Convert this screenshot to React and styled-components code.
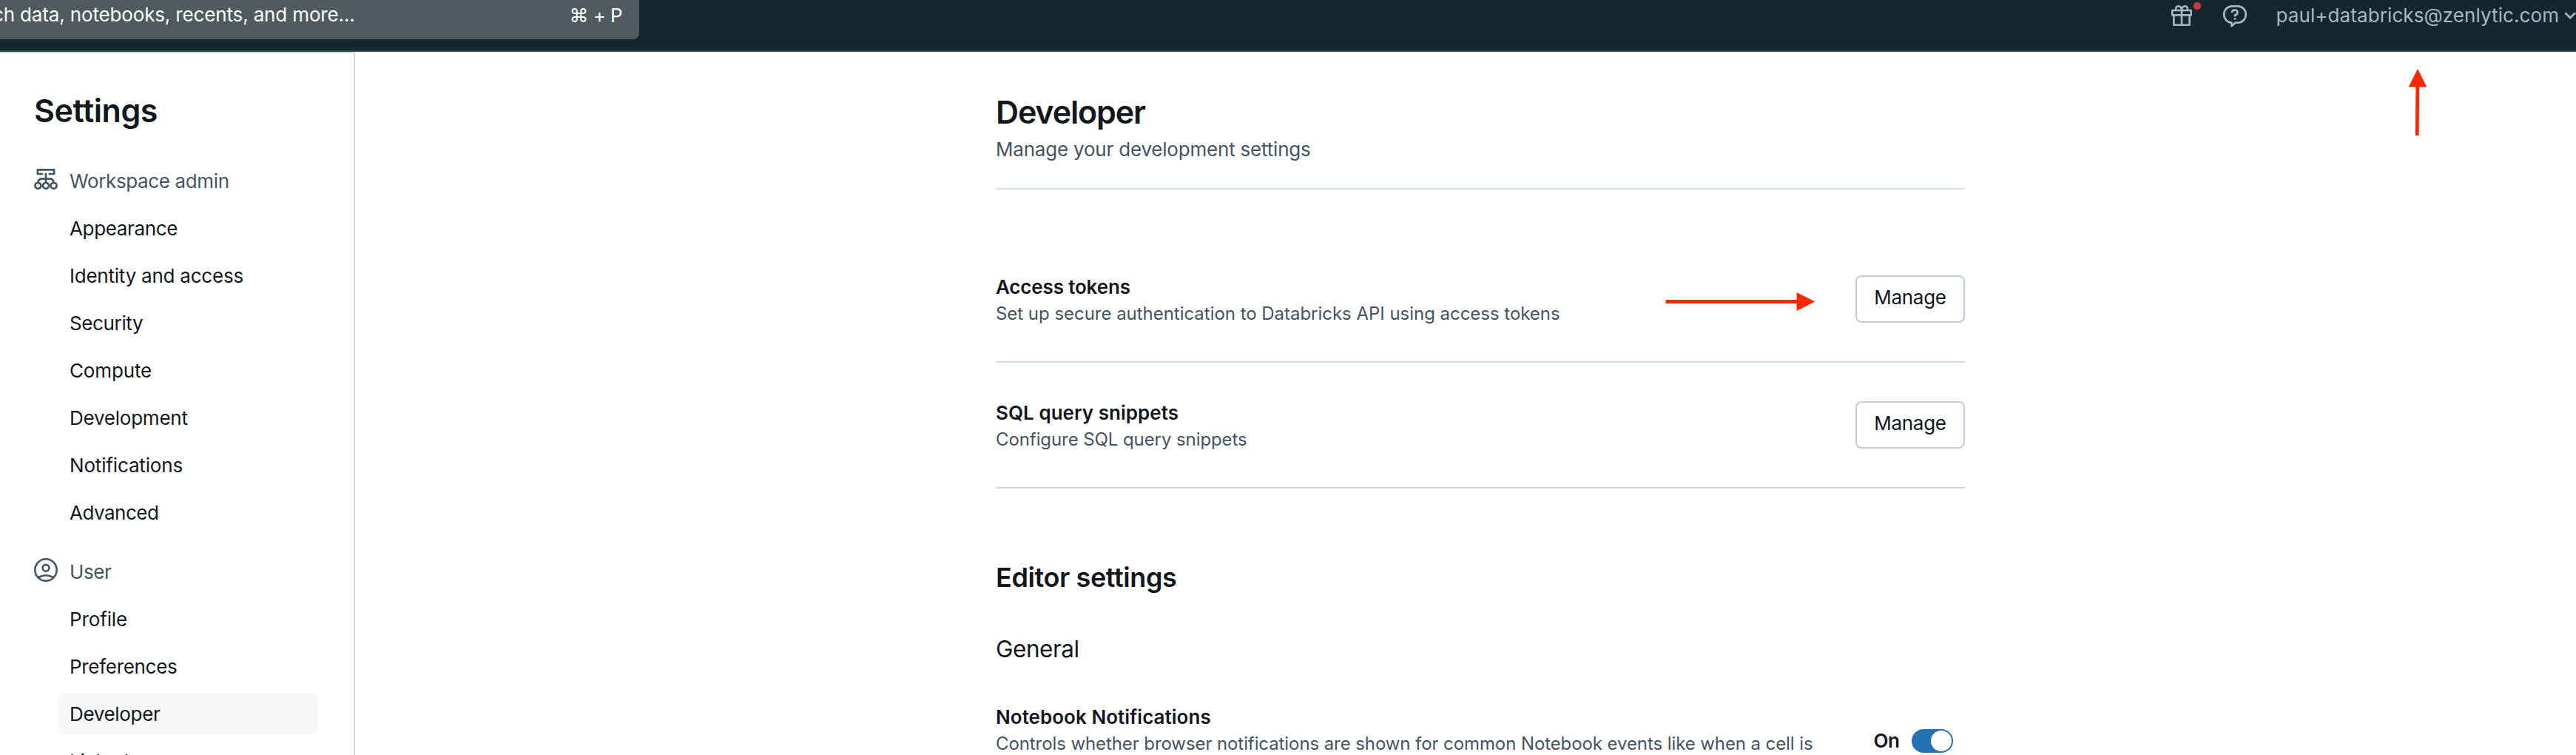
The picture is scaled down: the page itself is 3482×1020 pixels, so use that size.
import React from "react";
import styled, { createGlobalStyle } from "styled-components";

const GlobalStyle = createGlobalStyle`
  * { box-sizing: border-box; }
  html, body { margin: 0; padding: 0; background: #fff; }
  body { overflow: hidden; }
`;

const ink = "#11171c";
const muted = "#445461";
const line = "#d1d9e1";
const topIcon = "#a9b8c0";

const Page = styled.div`
  position: relative;
  display: flex;
  flex-direction: column;
  width: 3482px;
  height: 1020px;
  overflow: hidden;
  font-family: Inter, "Liberation Sans", sans-serif;
  font-size: 26px;
  color: ${ink};
  white-space: nowrap;
`;

const TopBar = styled.header`
  display: flex;
  justify-content: space-between;
  align-items: flex-start;
  flex: none;
  height: 70px;
  background: #13272f;
  border-bottom: 2px solid #2f434c;
`;

const SearchBox = styled.div`
  display: flex;
  justify-content: space-between;
  align-items: flex-start;
  width: 864px;
  height: 53px;
  padding: 4px 23px 0 0;
  background: #505b60;
  border-radius: 0 0 8px 0;
  color: #fff;
  line-height: 32px;
  overflow: hidden;
`;

const SearchText = styled.span`
  margin-left: -10px;
  letter-spacing: -0.15px;
`;

const Shortcut = styled.kbd`
  padding-top: 1px;
  font: inherit;
  letter-spacing: -0.6px;
`;

const Account = styled.div`
  display: flex;
  align-items: flex-start;
  width: 549px;
  color: ${topIcon};
  svg { flex: none; display: block; }
`;

const GiftSlot = styled.span`
  width: 44px;
  margin-right: 28px;
`;

const Email = styled.span`
  padding-top: 5px;
  margin-left: 39.5px;
  line-height: 32px;
  letter-spacing: 0.09px;
`;

const ChevronSlot = styled.span`
  margin-left: auto;
`;

const Body = styled.div`
  display: flex;
  flex: 1;
  min-height: 0;
`;

const Sidebar = styled.aside`
  flex: none;
  width: 480px;
  height: 950px;
  padding: 49px 48px 0 46px;
  border-top: 2px solid ${line};
  border-right: 2px solid ${line};
  overflow: hidden;
`;

const SidebarTitle = styled.h1`
  margin: 0 0 39px;
  font-size: 43px;
  font-weight: 600;
  line-height: 56px;
  letter-spacing: -0.43px;
`;

const Group = styled.section`
  display: flex;
  flex-direction: column;
  gap: 8px;
  margin-bottom: 24px;
`;

const GroupLabel = styled.div`
  display: flex;
  align-items: center;
  gap: 16px;
  height: 56px;
  color: ${muted};
  letter-spacing: ${(p) => p.$track}px;
  svg { flex: none; margin-bottom: 4px; }
`;

const NavItem = styled.a`
  display: flex;
  align-items: center;
  height: 56px;
  margin-left: 32px;
  padding-left: 16px;
  border-radius: 8px;
  background: ${(p) => (p.$active ? "#f6f7f9" : "transparent")};
  letter-spacing: ${(p) => p.$track}px;
`;

const Main = styled.main`
  width: 2176px;
  padding: 53px 0 0 866px;
`;

const PageHeader = styled.div`
  height: 133px;
  border-bottom: 2px solid ${line};
  margin-bottom: 64px;
`;

const PageTitle = styled.h2`
  margin: 0 0 3px;
  font-size: 43px;
  font-weight: 600;
  line-height: 56px;
  letter-spacing: -1.16px;
`;

const PageSubtitle = styled.p`
  margin: 0;
  line-height: 40px;
  color: ${muted};
  letter-spacing: -0.2px;
`;

const SettingRow = styled.div`
  display: flex;
  justify-content: space-between;
  align-items: center;
  height: 170px;
  border-bottom: 2px solid ${line};
`;

const SettingCopy = styled.div`
  padding-top: 4px;
`;

const SettingTitle = styled.h3`
  margin: 0;
  font-size: 26px;
  font-weight: 600;
  line-height: 36px;
  letter-spacing: ${(p) => p.$track || 0}px;
`;

const SettingText = styled.p`
  margin: 0;
  font-size: 24px;
  line-height: 36px;
  color: ${muted};
  letter-spacing: ${(p) => p.$track || 0}px;
`;

const Button = styled.button`
  width: 148px;
  height: 64px;
  padding: 0 0 5px;
  border: 2px solid #c0cdd8;
  border-radius: 8px;
  background: #fff;
  color: ${ink};
  font: 400 26px Inter, "Liberation Sans", sans-serif;
  letter-spacing: -0.3px;
`;

const SectionTitle = styled.h2`
  margin: 96px 0 53px;
  font-size: 36px;
  font-weight: 600;
  line-height: 48px;
  letter-spacing: -0.4px;
`;

const SubsectionTitle = styled.h3`
  margin: 0 0 50px;
  font-size: 31.5px;
  font-weight: 400;
  line-height: 40px;
  letter-spacing: -0.47px;
`;

const ToggleRow = styled.div`
  display: flex;
  justify-content: space-between;
  align-items: flex-start;
  padding-right: 16px;
`;

const ToggleControl = styled.div`
  display: flex;
  align-items: center;
  padding-top: 38px;
`;

const ToggleLabel = styled.span`
  width: 51.5px;
  font-weight: 600;
  line-height: 32px;
  letter-spacing: -0.5px;
`;

const Switch = styled.span`
  display: flex;
  justify-content: flex-end;
  width: 56px;
  height: 32px;
  padding: 2px;
  border-radius: 16px;
  background: #2272b4;
`;

const Knob = styled.span`
  width: 28px;
  height: 28px;
  border-radius: 50%;
  background: #fff;
`;

const Arrow = styled.svg`
  position: absolute;
  left: ${(p) => p.$x}px;
  top: ${(p) => p.$y}px;
  fill: #ff2600;
`;

const GiftIcon = () => (
  <svg width="44" height="40" viewBox="0 0 44 40" fill="none" stroke="currentColor" strokeWidth="2.6" strokeLinejoin="round">
    <path d="M3.3 14H28.7V20.4H3.3ZM5.4 20.4V33.7H26.6V20.4M16 14V33.7" />
    <path d="M16 13.5C15.5 10 13.8 8.3 11.5 8.3S7.6 10 8.2 13.5M16 13.5C16.5 10 18.2 8.3 20.5 8.3S24.4 10 23.8 13.5" />
    <circle cx="37" cy="8" r="5.2" fill="#d13244" stroke="none" />
  </svg>
);

const HelpIcon = () => (
  <svg width="32" height="40" viewBox="0 0 32 40" fill="none" stroke="currentColor" strokeWidth="2.7" strokeLinejoin="round">
    <path d="M12 8.3H20A10.7 10.7 0 0 1 30.7 19V20A10.7 10.7 0 0 1 20 30.7H16.5L11.5 35.2V30.7A10.7 10.7 0 0 1 1.3 20V19A10.7 10.7 0 0 1 12 8.3Z" />
    <path d="M12 17.2V16.6A3.5 3.5 0 0 1 15.5 13.6H16.5A3.3 3.3 0 0 1 16.9 20.1L16 20.4V22.6M16 24.1V26.6" />
  </svg>
);

const ChevronIcon = () => (
  <svg width="16" height="40" viewBox="0 0 16 40" fill="none" stroke="currentColor" strokeWidth="2.7">
    <path d="M1.4 17.4L8.2 24L15 17.4" />
  </svg>
);

const WorkspaceIcon = () => (
  <svg width="32" height="32" viewBox="0 0 32 32" fill="none" stroke="currentColor" strokeWidth="2.7" strokeLinejoin="round">
    <path d="M12.3 9H4.9V3.4H27.1V9H19.7M16 8V20.5M5.5 20.5C6 17 7.5 15.7 10 15.7H22C24.5 15.7 26 17 26.5 20.5" />
    <circle cx="5.4" cy="24.8" r="4" />
    <circle cx="16" cy="24.8" r="4" />
    <circle cx="26.6" cy="24.8" r="4" />
  </svg>
);

const UserIcon = () => (
  <svg width="32" height="32" viewBox="0 0 32 32" fill="none" stroke="currentColor" strokeWidth="2.6">
    <circle cx="16" cy="16" r="14.7" />
    <circle cx="16" cy="13.3" r="4.4" />
    <path d="M6 26C9.5 24.1 12.5 23.3 16 23.3S22.5 24.1 26 26" />
  </svg>
);

const groups = [
  {
    label: "Workspace admin",
    track: -0.36,
    Icon: WorkspaceIcon,
    items: [
      ["Appearance", -0.34],
      ["Identity and access", -0.23],
      ["Security", -0.37],
      ["Compute", -0.15],
      ["Development", -0.23],
      ["Notifications", -0.16],
      ["Advanced", -0.5],
    ],
  },
  {
    label: "User",
    track: -0.4,
    Icon: UserIcon,
    items: [
      ["Profile", -0.13],
      ["Preferences", -0.3],
      ["Developer", -0.33],
      ["Linked", -0.25],
    ],
  },
];

const settings = [
  {
    title: "Access tokens",
    titleTrack: -0.16,
    text: "Set up secure authentication to Databricks API using access tokens",
    textTrack: -0.03,
  },
  {
    title: "SQL query snippets",
    titleTrack: 0.03,
    text: "Configure SQL query snippets",
    textTrack: -0.085,
  },
];

export default function App() {
  return (
    <Page>
      <GlobalStyle />
      <TopBar>
        <SearchBox>
          <SearchText>ch data, notebooks, recents, and more...</SearchText>
          <Shortcut>⌘ + P</Shortcut>
        </SearchBox>
        <Account>
          <GiftSlot><GiftIcon /></GiftSlot>
          <HelpIcon />
          <Email>paul+databricks@zenlytic.com</Email>
          <ChevronSlot><ChevronIcon /></ChevronSlot>
        </Account>
      </TopBar>
      <Body>
        <Sidebar>
          <SidebarTitle>Settings</SidebarTitle>
          {groups.map(({ label, track, Icon, items }) => (
            <Group key={label}>
              <GroupLabel $track={track}>
                <Icon />
                {label}
              </GroupLabel>
              {items.map(([name, t]) => (
                <NavItem key={name} $track={t} $active={name === "Developer"}>
                  {name}
                </NavItem>
              ))}
            </Group>
          ))}
        </Sidebar>
        <Main>
          <PageHeader>
            <PageTitle>Developer</PageTitle>
            <PageSubtitle>Manage your development settings</PageSubtitle>
          </PageHeader>
          {settings.map((s) => (
            <SettingRow key={s.title}>
              <SettingCopy>
                <SettingTitle $track={s.titleTrack}>{s.title}</SettingTitle>
                <SettingText $track={s.textTrack}>{s.text}</SettingText>
              </SettingCopy>
              <Button>Manage</Button>
            </SettingRow>
          ))}
          <SectionTitle>Editor settings</SectionTitle>
          <SubsectionTitle>General</SubsectionTitle>
          <ToggleRow>
            <SettingCopy>
              <SettingTitle $track={0.03}>Notebook Notifications</SettingTitle>
              <SettingText $track={-0.09}>
                Controls whether browser notifications are shown for common Notebook events like when a cell is
              </SettingText>
            </SettingCopy>
            <ToggleControl>
              <ToggleLabel>On</ToggleLabel>
              <Switch><Knob /></Switch>
            </ToggleControl>
          </ToggleRow>
        </Main>
      </Body>
      <Arrow $x={3255} $y={92} width="26" height="92" viewBox="0 0 26 92">
        <path d="M13 1L25.3 25.5H15.2L14.6 91H9.8L10.4 25.5H0.7Z" />
      </Arrow>
      <Arrow $x={2251} $y={394} width="203" height="27" viewBox="0 0 203 27">
        <path d="M0.5 11H177.5V1L202.3 13.4L177.5 26V16H0.5Z" />
      </Arrow>
    </Page>
  );
}
